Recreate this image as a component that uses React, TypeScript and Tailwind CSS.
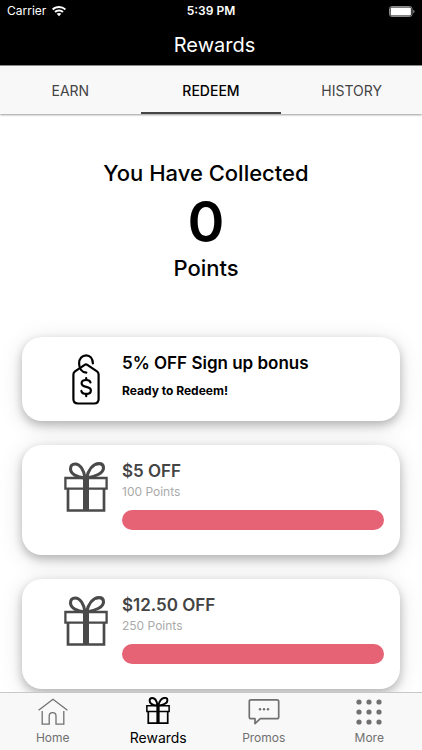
import type { ReactNode } from "react";
import { clsx } from "clsx";

function WifiIcon() {
  return (
    <svg viewBox="0 0 14 11" className="h-[11px] w-[14px]" fill="currentColor" aria-hidden="true">
      <path d="M7 0C4.3 0 1.900 1 0 2.800l1.300 1.400A8.200 8.200 0 0 1 7 1.900c2.200 0 4.200.9 5.700 2.300L14 2.800A10.200 10.200 0 0 0 7 0Z" />
      <path d="M7 3.500c-1.800 0-3.400.7-4.600 1.800l1.300 1.400A4.800 4.800 0 0 1 7 5.400c1.300 0 2.400.5 3.300 1.300l1.300-1.400A6.700 6.700 0 0 0 7 3.500Z" />
      <path d="M7 6.900c-.9 0-1.700.3-2.300.9L7 10.300l2.300-2.500c-.6-.6-1.400-.9-2.300-.9Z" />
    </svg>
  );
}

function BatteryIcon() {
  return (
    <svg viewBox="0 0 26 11" className="h-[11px] w-[26px]" aria-hidden="true">
      <rect x="0.5" y="0.5" width="22.500" height="10" rx="2.300" fill="none" stroke="#8a8a8a" />
      <rect x="1.600" y="1.600" width="20.300" height="7.800" rx="1" fill="#fff" />
      <path d="M24.200 3.700v3.600c.9-.3 1.300-.9 1.300-1.800S25.100 4 24.200 3.700Z" fill="#8a8a8a" />
    </svg>
  );
}

function TagIcon() {
  return (
    <svg
      viewBox="0 0 28 52"
      className="h-[52px] w-[28px]"
      fill="none"
      stroke="#000"
      strokeWidth="2.200"
      strokeLinecap="round"
      strokeLinejoin="round"
      aria-hidden="true"
    >
      <path d="M12.700 11.800Q14 10.900 15.300 11.800L25 18.300Q26.600 19.500 26.600 21.500V46Q26.600 50.500 22.100 50.500H5.900Q1.400 50.500 1.400 46V21.500Q1.400 19.500 3 18.300Z" />
      <path d="M14.300 19.700C10 19.200 7.100 15.600 7.100 10.400 7.100 5.500 10.200 2.300 14.200 2.300 18 2.300 20.700 5.300 20.900 10.400" />
      <path d="M18.500 29.500C18.100 27.900 16.500 27 14.200 27 11.500 27 9.600 28.200 9.600 30.300 9.600 32.400 11.200 33.200 14.200 33.800 17.200 34.400 18.900 35.300 18.900 37.500 18.900 39.700 17 40.900 14.200 40.900 11.500 40.900 9.800 39.700 9.400 37.900" />
      <path d="M14.200 25v2M14.200 41v2.200" />
    </svg>
  );
}

function GiftIcon({ className, heavy }: { className: string; heavy?: boolean }) {
  return (
    <svg viewBox="0 0 44 50" className={className} fill="none" stroke="currentColor" aria-hidden="true">
      <path d="M1.400 16h41.200v10.700H1.400Z" strokeWidth={heavy ? 2.800 : 2.300} />
      <path d="M4 26v22.500h36V26" strokeWidth={heavy ? 3.200 : 2.700} />
      <path d="M22 15v34" strokeWidth="6" />
      <path
        d="M21 16C13 15.200 6.500 12 6.500 7 6.500 3.800 8.500 2 11.200 2 16.200 2 20 8 21 16Z"
        strokeWidth={heavy ? 3.600 : 3.100}
        strokeLinejoin="round"
      />
      <path
        d="M22.500 16C31 14.800 39.500 11.200 39.500 6 39.500 3.200 37.800 1.600 35 1.600 29 1.600 24.500 8 22.500 16Z"
        strokeWidth={heavy ? 3.600 : 3.100}
        strokeLinejoin="round"
      />
    </svg>
  );
}

function HomeIcon() {
  return (
    <svg viewBox="0 0 30 28" className="h-[28px] w-[30px]" fill="none" stroke="currentColor" strokeWidth="1.300" aria-hidden="true">
      <path d="M.6 12.300 15 1.200l14.400 11.100" />
      <path d="M4.200 13v13.200h7v-8.200a3.400 3.400 0 0 1 6.800 0v8.200h7.800V13" />
    </svg>
  );
}

function ChatIcon() {
  return (
    <svg viewBox="0 0 32 28" className="h-[28px] w-[32px]" fill="none" stroke="currentColor" strokeWidth="1.700" aria-hidden="true">
      <path d="M3 1.800h26q1.700 0 1.700 1.700v15.500q0 1.700-1.700 1.700H12.300L7 25.700v-5H3q-1.700 0-1.700-1.700v-15.500q0-1.700 1.700-1.700Z" strokeLinejoin="round" />
      <g fill="currentColor" stroke="none">
        <circle cx="12" cy="11.200" r="1.200" />
        <circle cx="16" cy="11.200" r="1.200" />
        <circle cx="20" cy="11.200" r="1.200" />
      </g>
    </svg>
  );
}

function DotsIcon() {
  return (
    <svg viewBox="0 0 26 26" className="h-[26px] w-[26px]" fill="currentColor" aria-hidden="true">
      {[3, 13, 23].map((y) => [3, 13, 23].map((x) => <circle key={`${x}-${y}`} cx={x} cy={y} r="2.600" />))}
    </svg>
  );
}

const tabs = ["EARN", "REDEEM", "HISTORY"];

const rewards = [
  { name: "$5 OFF", points: 100 },
  { name: "$12.50 OFF", points: 250 },
];

function RewardCard({ icon, children }: { icon: ReactNode; children: ReactNode }) {
  return (
    <li className="flex rounded-[20px] bg-white pr-4 shadow-[0_4px_10px_rgba(0,0,0,0.24),0_4px_24px_rgba(0,0,0,0.12)]">
      <div className="flex w-[100px] shrink-0 items-start justify-center pt-4 pl-7">{icon}</div>
      <div className="min-w-0 flex-1">{children}</div>
    </li>
  );
}

function NavItem({ label, icon, active }: { label: string; icon: ReactNode; active?: boolean }) {
  return (
    <a
      href="#"
      aria-current={active ? "page" : undefined}
      className={clsx("flex flex-col items-center gap-[3px] pt-1", active ? "text-black" : "text-[#707070]")}
    >
      <span className={clsx("flex h-[30px]", active ? "items-start" : "items-center")}>{icon}</span>
      <span className={clsx("leading-4", active ? "text-[14px]" : "text-[12px]")}>{label}</span>
    </a>
  );
}

export default function App() {
  return (
    <div className="flex h-screen flex-col overflow-hidden bg-white font-[Inter,'Liberation_Sans',sans-serif] text-black">
      <header className="shrink-0 bg-black text-white">
        <div className="grid grid-cols-3 items-center px-[7px] pt-[3px] text-[12px] leading-4">
          <div className="flex items-center gap-[6px]">
            <span>Carrier</span>
            <WifiIcon />
          </div>
          <div className="text-center font-semibold">5:39 PM</div>
          <div className="flex justify-end">
            <BatteryIcon />
          </div>
        </div>
        <h1 className="pt-[14px] pb-2 pl-[7px] text-center text-[20px] leading-6">Rewards</h1>
      </header>

      <div role="tablist" className="z-10 grid shrink-0 grid-cols-3 border-t border-[#8a8a8a] bg-[#f8f8f8] shadow-[0_1px_2px_rgba(0,0,0,0.4)]">
        {tabs.map((tab) => (
          <button
            key={tab}
            type="button"
            role="tab"
            aria-selected={tab === "REDEEM"}
            className={clsx(
              "h-[48px] border-b-2 pt-[2px] text-[14px]",
              tab === "REDEEM" ? "border-[#444] font-medium text-black" : "border-transparent text-[#444]",
            )}
          >
            {tab}
          </button>
        ))}
      </div>

      <main className="min-h-0 flex-1 overflow-y-auto [scrollbar-width:none]">
        <section className="pt-11 pr-[10px] text-center font-medium">
          <p className="text-[22px] leading-[30px]">You Have Collected</p>
          <p className="text-[56px] leading-[68px] font-semibold">0</p>
          <p className="text-[22px] leading-6">Points</p>
        </section>

        <ul className="flex flex-col gap-6 px-[22px] pt-[57px] pb-6">
          <RewardCard icon={<TagIcon />}>
            <h2 className="pt-4 text-[17px] leading-5 font-semibold">5% OFF Sign up bonus</h2>
            <p className="pt-[10px] pb-[22px] text-[12px] leading-4 font-bold">Ready to Redeem!</p>
          </RewardCard>
          {rewards.map((reward) => (
            <RewardCard key={reward.name} icon={<GiftIcon className="h-[52px] w-[44px] text-[#4a4a4a]" />}>
              <h2 className="pt-4 text-[17px] leading-5 font-semibold text-[#444]">{reward.name}</h2>
              <p className="pt-[3px] text-[12px] leading-4 text-[#aaa]">{reward.points} Points</p>
              <div
                role="progressbar"
                aria-label={`${reward.name} progress`}
                aria-valuenow={0}
                aria-valuemax={reward.points}
                className="mt-[10px] mb-[25px] h-5 rounded-full bg-[#e66375]"
              />
            </RewardCard>
          ))}
        </ul>
      </main>

      <nav className="z-10 grid h-[58px] shrink-0 grid-cols-4 border-t border-[#c8c8c8] bg-[#f8f8f8]">
        <NavItem label="Home" icon={<HomeIcon />} />
        <NavItem label="Rewards" icon={<GiftIcon className="h-[27px] w-[24px]" heavy />} active />
        <NavItem label="Promos" icon={<ChatIcon />} />
        <NavItem label="More" icon={<DotsIcon />} />
      </nav>
    </div>
  );
}
